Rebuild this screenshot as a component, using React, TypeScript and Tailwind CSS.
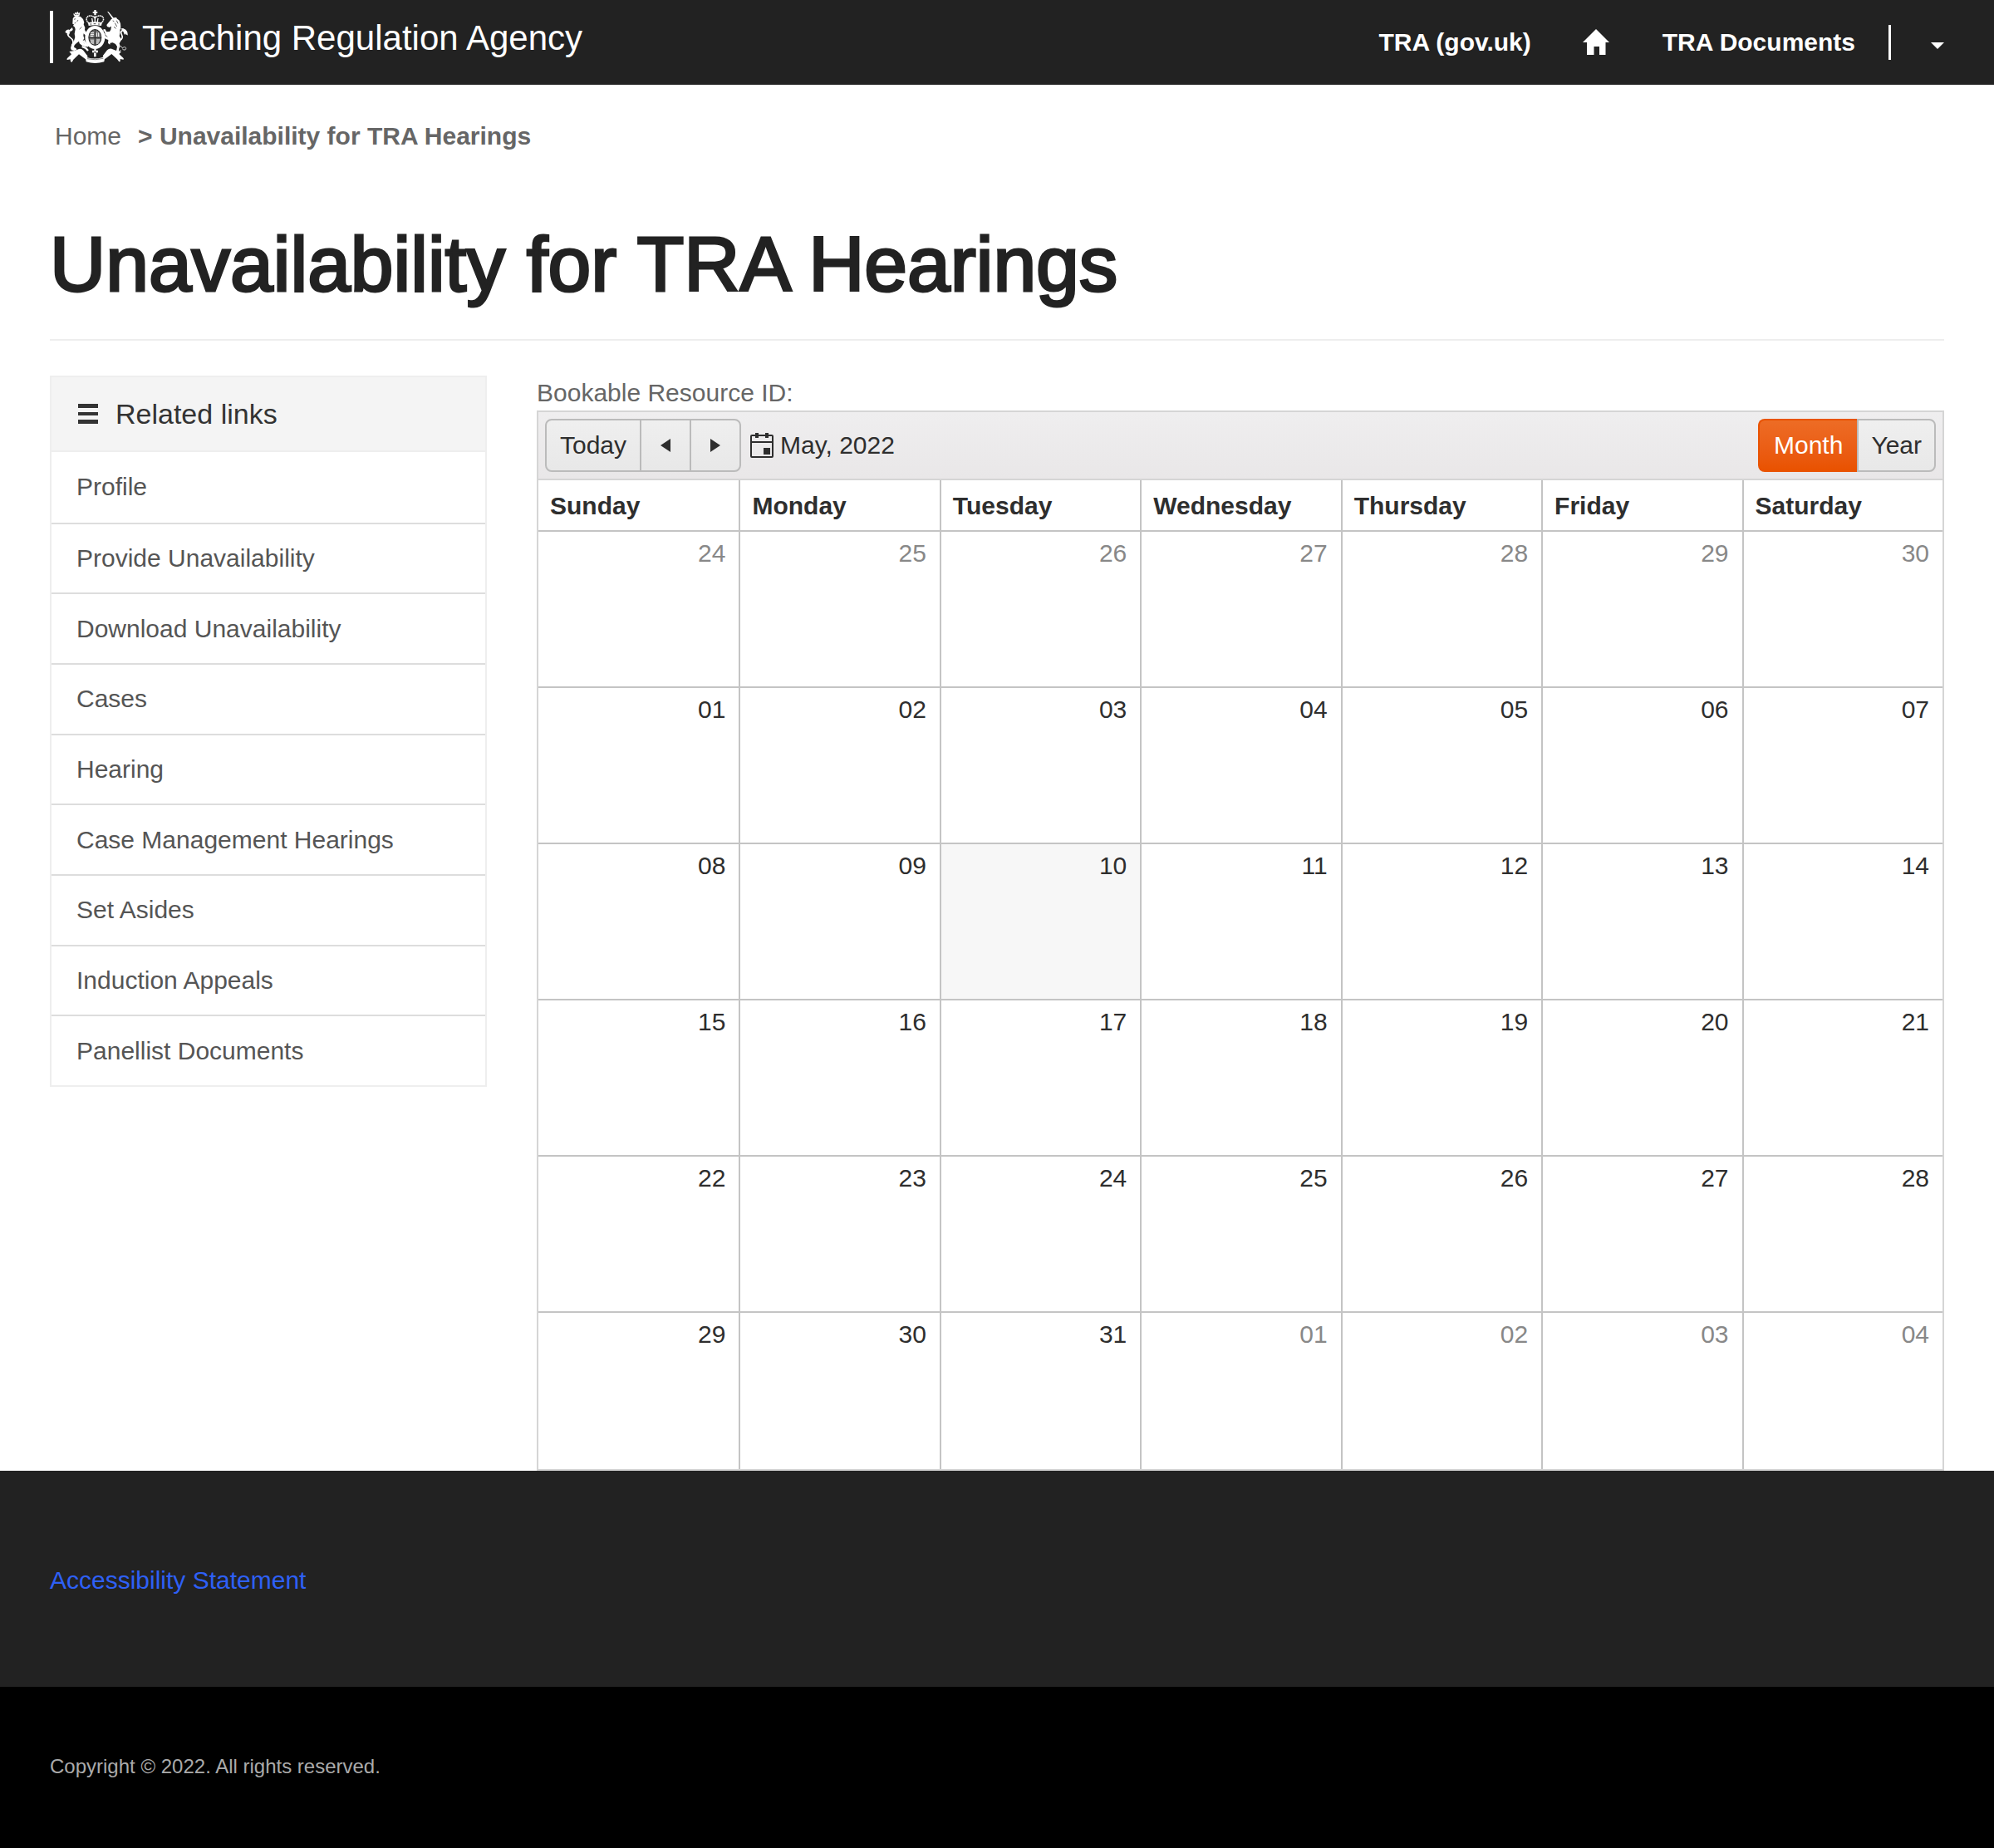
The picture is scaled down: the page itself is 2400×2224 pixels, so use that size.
import React from "react";

const links = [
  "Profile",
  "Provide Unavailability",
  "Download Unavailability",
  "Cases",
  "Hearing",
  "Case Management Hearings",
  "Set Asides",
  "Induction Appeals",
  "Panellist Documents",
];

const days = ["Sunday", "Monday", "Tuesday", "Wednesday", "Thursday", "Friday", "Saturday"];

const weeks = [
  ["24", "25", "26", "27", "28", "29", "30"],
  ["01", "02", "03", "04", "05", "06", "07"],
  ["08", "09", "10", "11", "12", "13", "14"],
  ["15", "16", "17", "18", "19", "20", "21"],
  ["22", "23", "24", "25", "26", "27", "28"],
  ["29", "30", "31", "01", "02", "03", "04"],
];

const isOtherMonth = (week: number, day: number) => week === 0 || (week === 5 && day > 2);
const isToday = (week: number, day: number) => week === 2 && day === 2;

function Crest() {
  return (
    <svg className="h-[68px] w-[78px]" viewBox="90 30 234 204" fill="#fff" aria-hidden="true">
      {/* crown */}
      <path d="M196 36h7v6h5v5h-5v7h-7v-7h-5v-5h5z" />
      <path
        d="M177 84c-14-12-10-26 4-27 9 0 15 4 18 9 4-6 10-9 18-9 14 1 18 15 4 27"
        fill="none"
        stroke="#fff"
        strokeWidth="4.5"
        strokeDasharray="5 1.5"
      />
      <path d="M199 56v28M188 66l3 17M210 66l-3 17" stroke="#fff" strokeWidth="4" fill="none" />
      <path d="M174 82q25-6 50 0l-2 11q-23-5-46 0z" />
      <path d="M181 87h6m7-1h8m8 1h6" stroke="#222" strokeWidth="2.5" />
      {/* garter and shield */}
      <ellipse cx="199" cy="135" rx="36" ry="42" />
      <ellipse cx="199" cy="135" rx="24" ry="30" fill="#222" />
      <ellipse cx="199" cy="135" rx="21" ry="27" fill="#777" />
      <path
        d="M183 119h12M183 125h12M183 131h10M205 118v14M212 118v14M186 143v14M192 143v16M205 144h12M204 150h11M204 156h8"
        stroke="#fff"
        strokeWidth="3"
      />
      <path d="M199 107v56M177 137h44" stroke="#222" strokeWidth="3" />
      {/* lion */}
      <path d="M121 48l4 3 2-7 5 3 4-6 3 6 6-2-2 11-7 3h-9l-5-4z" />
      <path d="M126 52h14" stroke="#222" strokeWidth="2.5" strokeDasharray="3 2" />
      <path d="M119 67l5-7 10-3 13 3 9 9 4 12-2 7 5 12-1 8 7 11 6 4-3 6-9-3-5-5-1 8 3 10-5 8 5 9 12 6 1 6-9 1-12-5-9-7-2-8-8 6-8 8-2 7 8 5 2 5-9 3-10-2-3-7 3-12 9-14 4-14-2-12 3-16-2-8-6-5 3-5-5-2z" />
      <path d="M123 70l6-2M138 72l-4 6M130 82l-5 2M151 97l-8 9" stroke="#222" strokeWidth="2" fill="none" />
      <path
        d="M116 163c8-10 3-21-6-27-10-7-13-16-6-23 5-5 11-5 12-9"
        fill="none"
        stroke="#fff"
        strokeWidth="5"
      />
      <path d="M92 113q6-8 14-6l-3 9 7-2-5 12q-6-1-7-6l-6-2zM108 107l9-8 2 9-8 6z" />
      <path d="M157 146l17 22M152 168l14 6 8 9" stroke="#fff" strokeWidth="7" fill="none" />
      {/* unicorn */}
      <path d="M243 41l5 2 20 24-5 3z" />
      <path d="M258 69l10-5 8-1 3 5 7 5 5 12 1 14-3 10 1 9-3 12 6 10-1 8-5 9 3 10-4 8-2 13-10 1 3-9 2-12-6-9-10-5-9 1-1 6-7-5 1-12-10-4-8-10-2-8 6-1 4 9 9 4-10-9-2-10-5-3 1-7 6 1 5 9 11-1 4-7 2-12-7 4-8-3-2-6z" />
      <path d="M263 75l5 2M277 74l5 11M271 83l7 13M267 97l8 6" stroke="#222" strokeWidth="2.2" fill="none" />
      <path
        d="M288 146c10-4 12-12 7-22-5-9 0-15 9-14 9 1 12 8 8 15"
        fill="none"
        stroke="#fff"
        strokeWidth="5"
      />
      <path d="M298 108l-8-4 10-2 10 5 5 9 3 12-8-7-4 5-4-10z" />
      <path
        d="M281 172c9-7 15-6 17 2 6-6 13-5 13 1s-8 7-13 2M292 180c-6 8-12 8-12 2"
        fill="none"
        stroke="#ddd"
        strokeWidth="3"
      />
      {/* scroll */}
      <path d="M106 186q20-1 35-9 9-2 16 5l16 21-8 11-24-18-20 19-5 9-5-1-1-9-11 2q-4-2 0-6l15-14z" />
      <path d="M294 186q-20-2-35-10-9-2-16 5l-16 21 8 11 24-18 20 19 7 9 4-1v-9l11 2q4-2 0-6l-15-14z" />
      <path d="M163 201l9 7q27 8 54-1l10-6-4 22q-33 10-65 0z" />
      <path d="M171 212q28 7 58-1" fill="none" stroke="#222" strokeWidth="1.5" />
      <path d="M196 176h7v6h7v8h-7v15h-8v-15h-6v-8h7z" />
      <circle cx="199" cy="188" r="3" fill="#222" />
    </svg>
  );
}

function HomeIcon() {
  return (
    <svg className="h-8 w-8" viewBox="0 0 32 32" fill="#fff" aria-hidden="true">
      <path d="M16 0L32 16h-4.500V31H20V21h-6.500v10H5V16H0z" />
    </svg>
  );
}

function CalendarIcon() {
  return (
    <svg className="h-[30px] w-7" viewBox="0 0 28 30" aria-hidden="true">
      <rect x="1" y="3" width="26" height="26" rx="1" fill="none" stroke="#2e2e2e" strokeWidth="2" />
      <path d="M1 11h26" stroke="#2e2e2e" strokeWidth="2" />
      <path d="M6 0h4v6H6zM18 0h4v6h-4zM16 18h8v8h-8z" fill="#2e2e2e" />
    </svg>
  );
}

export default function App() {
  return (
    <div className="bg-white font-['Liberation_Sans',Arial,sans-serif] text-[30px] leading-10 text-[#666]">
      <header className="flex min-h-[102px] items-center justify-between bg-[#222] px-[60px] text-white">
        <a href="#" className="flex items-center self-start pt-[10px]">
          <span className="h-[63px] w-1 bg-white" />
          <span className="ml-[14px]">
            <Crest />
          </span>
          <span className="ml-[15px] pt-1 text-[42px] leading-[48px]">Teaching Regulation Agency</span>
        </a>
        <nav className="flex items-center font-bold">
          <a href="#">TRA (gov.uk)</a>
          <a href="#" aria-label="Home" className="ml-[62px]">
            <HomeIcon />
          </a>
          <a href="#" className="ml-16">
            TRA Documents
          </a>
          <span className="ml-10 h-[42px] w-[3px] bg-white" />
          <button type="button" aria-label="Account menu" className="ml-12 pt-2">
            <svg className="h-2 w-4" viewBox="0 0 16 8" fill="#fff" aria-hidden="true">
              <path d="M0 0h16L8 8z" />
            </svg>
          </button>
        </nav>
      </header>

      <main className="px-[60px] pt-[42px]">
        <nav aria-label="Breadcrumb" className="flex pl-[6px]">
          <a href="#">Home</a>
          <span className="ml-5 font-bold">&gt; Unavailability for TRA Hearings</span>
        </nav>

        <h1 className="mt-[84px] border-b-2 border-[#eee] pb-10 text-[93px] leading-[100px] text-[#222] [-webkit-text-stroke:3px_#222]">
          Unavailability for TRA Hearings
        </h1>

        <div className="mt-[42px] grid grid-cols-[526fr_1694fr] items-start gap-[60px]">
          <aside className="border-2 border-[#eee]">
            <h2 className="flex items-center gap-[21px] border-b-2 border-[#eee] bg-[#f4f4f4] px-8 py-[22px] text-[34px] leading-[44px] text-[#333]">
              <svg className="h-6 w-6" viewBox="0 0 24 24" fill="#333" aria-hidden="true">
                <path d="M0 0h24v5H0zM0 10h24v4H0zM0 19h24v5H0z" />
              </svg>
              Related links
            </h2>
            <ul className="grid min-h-[762px] auto-rows-fr">
              {links.map((link) => (
                <li
                  key={link}
                  className="flex items-center border-t-2 border-[#ddd] px-[30px] text-[#555] first:border-t-0"
                >
                  <a href="#">{link}</a>
                </li>
              ))}
            </ul>
          </aside>

          <section>
            <p className="leading-[42px]">Bookable Resource ID:</p>
            <div className="border-2 border-[#d5d5d5] text-[#2e2e2e]">
              <div className="flex items-center justify-between border-b-2 border-[#d5d5d5] bg-linear-to-b from-[#efeeef] to-[#e9e7e8] p-2">
                <div className="flex items-center">
                  <div className="flex divide-x-2 divide-[#bbb] rounded-lg border-2 border-[#bbb] bg-linear-to-b from-[#efefef] to-[#e8e8e8]">
                    <button type="button" className="px-4 leading-[60px]">
                      Today
                    </button>
                    <button type="button" aria-label="Previous" className="flex w-[60px] items-center justify-center">
                      <svg className="h-4 w-3" viewBox="0 0 12 16" fill="#2e2e2e" aria-hidden="true">
                        <path d="M12 0v16L0 8z" />
                      </svg>
                    </button>
                    <button type="button" aria-label="Next" className="flex w-[58px] items-center justify-center">
                      <svg className="h-4 w-3" viewBox="0 0 12 16" fill="#2e2e2e" aria-hidden="true">
                        <path d="M0 0v16l12-8z" />
                      </svg>
                    </button>
                  </div>
                  <button type="button" className="ml-[11px] flex items-center gap-2">
                    <CalendarIcon />
                    <span>May, 2022</span>
                  </button>
                </div>
                <div className="flex">
                  <button
                    type="button"
                    className="rounded-l-lg border-2 border-r-0 border-[#e95300] bg-linear-to-b from-[#ed6c25] to-[#e95200] px-[17px] leading-[60px] text-white"
                  >
                    Month
                  </button>
                  <button
                    type="button"
                    className="rounded-r-lg border-2 border-[#bbb] bg-linear-to-b from-[#efefef] to-[#e8e8e8] px-[15px] leading-[60px]"
                  >
                    Year
                  </button>
                </div>
              </div>
              <table className="w-full table-fixed border-separate border-spacing-0">
                <thead>
                  <tr>
                    {days.map((day) => (
                      <th
                        key={day}
                        scope="col"
                        className="h-[62px] border-b-2 border-l-2 border-[#c4c4c4] px-[14px] pt-[2px] text-left font-bold first:border-l-0"
                      >
                        {day}
                      </th>
                    ))}
                  </tr>
                </thead>
                <tbody>
                  {weeks.map((week, w) => (
                    <tr key={w} className="group">
                      {week.map((date, d) => (
                        <td
                          key={d}
                          className={`h-[188px] border-b-2 border-l-2 border-[#c4c4c4] px-4 pt-[6px] text-right align-top first:border-l-0 group-last:border-b-0 ${
                            isOtherMonth(w, d) ? "text-[#888]" : ""
                          } ${isToday(w, d) ? "bg-[#f7f7f7]" : ""}`}
                        >
                          {date}
                        </td>
                      ))}
                    </tr>
                  ))}
                </tbody>
              </table>
            </div>
          </section>
        </div>
      </main>

      <footer>
        <div className="bg-[#222] px-[60px] pt-28 pb-[108px]">
          <a href="#" className="text-[#2e60f6]">
            Accessibility Statement
          </a>
        </div>
        <div className="bg-black px-[60px] pt-20 pb-[82px] text-2xl leading-8 text-[#aaa]">
          Copyright © 2022. All rights reserved.
        </div>
      </footer>
    </div>
  );
}
